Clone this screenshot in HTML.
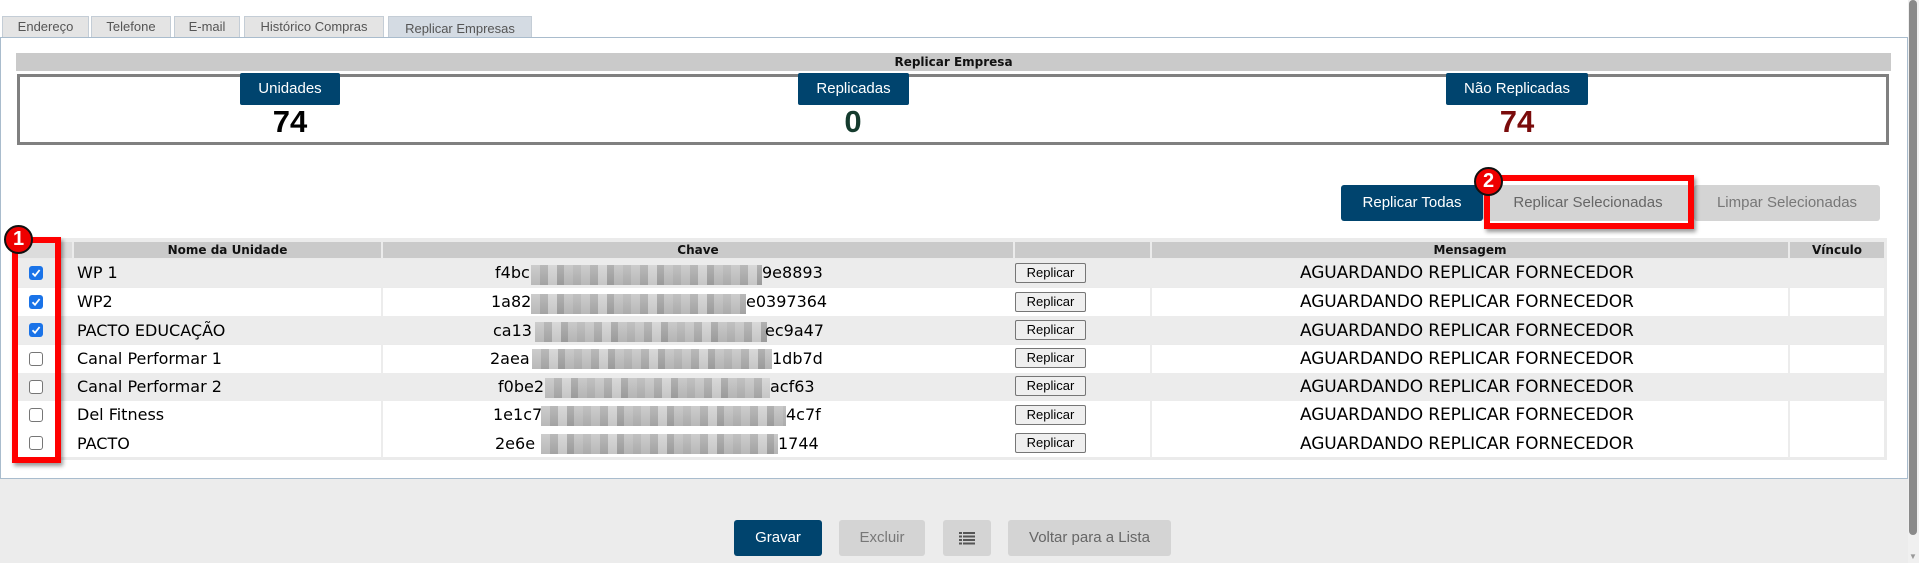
<!DOCTYPE html>
<html><head><meta charset="utf-8"><style>
*{margin:0;padding:0;box-sizing:border-box}
body{width:1919px;height:563px;background:#ececec;position:relative;overflow:hidden;font-family:"Liberation Sans",Arial,sans-serif}
.a{position:absolute}
.tab{position:absolute;top:16px;height:21px;background:#e4e4e4;border:1px solid #c4cdd6;border-bottom:none;font-size:13px;color:#555;text-align:center;line-height:19px}
.badge{position:absolute;top:73px;height:32px;background:#00446e;color:#fff;font-size:15px;text-align:center;line-height:32px;border-radius:2px}
.num{position:absolute;top:104px;font-size:31px;font-weight:bold;text-align:center;width:200px}
.btn{position:absolute;font-size:15px;text-align:center;border-radius:3px}
.hd{position:absolute;top:242px;height:16px;background:#cacaca;font:bold 12px "DejaVu Sans",Verdana,sans-serif;text-align:center;line-height:16px;color:#111}
.row{position:absolute;left:16px;width:1868px;height:28px}
.cell{position:absolute;top:0;height:100%;font:16px "DejaVu Sans",Verdana,sans-serif;line-height:28px;color:#000;white-space:nowrap}
.msg{font-size:17px;letter-spacing:-0.1px}
.cb{position:absolute;left:29px;width:14px;height:14px;border-radius:3px}
.cb.on{background:#1a73e8}
.cb.off{background:#fff;border:1px solid #767676}
.cb svg{position:absolute;left:2px;top:2px}
.rb{position:absolute;left:1015px;width:71px;height:20px;border:1px solid #767676;border-radius:2px;background:#efefef;font-size:13px;text-align:center;line-height:18px}
.blur{position:absolute;height:20px;background:linear-gradient(180deg,rgba(255,255,255,.15),rgba(0,0,0,.06)),repeating-linear-gradient(90deg,#c4c4c4 0 9px,#adadad 9px 17px,#d2d2d2 17px 26px,#a4a4a4 26px 33px,#c0c0c0 33px 42px,#b6b6b6 42px 50px)}
</style></head><body>
<div class="a" style="left:0;top:0;width:1908px;height:37px;background:#fff"></div>
<div class="tab" style="left:2px;width:87px">Endereço</div>
<div class="tab" style="left:91px;width:80px">Telefone</div>
<div class="tab" style="left:174px;width:66px">E-mail</div>
<div class="tab" style="left:244px;width:140px">Histórico Compras</div>
<div class="tab" style="left:388px;top:16px;height:22px;width:144px;background:#d4dbe3;line-height:24px">Replicar Empresas</div>
<div class="a" style="left:0;top:37px;width:1908px;height:442px;background:#fff;border:1px solid #a9bccd"></div>
<div class="a" style="left:16px;top:53px;width:1875px;height:18px;background:#cacaca;font:bold 12px 'DejaVu Sans',Verdana,sans-serif;text-align:center;line-height:18px;color:#111">Replicar Empresa</div>
<div class="a" style="left:17px;top:74px;width:1872px;height:71px;border:3px solid #808080"></div>
<div class="badge" style="left:240px;width:100px">Unidades</div>
<div class="num" style="left:190px;color:#000">74</div>
<div class="badge" style="left:798px;width:111px">Replicadas</div>
<div class="num" style="left:753px;color:#153b2e">0</div>
<div class="badge" style="left:1446px;width:142px">Não Replicadas</div>
<div class="num" style="left:1417px;color:#7a0b0b">74</div>
<div class="btn" style="left:1341px;top:185px;width:142px;height:36px;background:#00446e;color:#fff;line-height:36px">Replicar Todas</div>
<div class="btn" style="left:1483px;top:185px;width:210px;height:36px;background:#d4d4d4;color:#666;line-height:36px">Replicar Selecionadas</div>
<div class="btn" style="left:1694px;top:185px;width:186px;height:36px;background:#d4d4d4;color:#777;line-height:36px">Limpar Selecionadas</div>
<div class="a" style="left:1484px;top:175px;width:210px;height:54px;border:6px solid #f00;box-shadow:2px 3px 4px rgba(0,0,0,.4)"></div>
<div class="a" style="left:1474px;top:167px;width:29px;height:29px;border-radius:50%;background:#e00;border:2px solid #111;color:#fff;font:bold 20px 'Liberation Sans',sans-serif;text-align:center;line-height:25px">2</div>
<div class="a" style="left:16px;top:238px;width:1871px;height:222px;background:#ebebeb"></div>
<div class="hd" style="left:74px;width:307px">Nome da Unidade</div>
<div class="hd" style="left:383px;width:630px">Chave</div>
<div class="hd" style="left:1015px;width:135px"></div>
<div class="hd" style="left:1152px;width:636px">Mensagem</div>
<div class="hd" style="left:1790px;width:94px">Vínculo</div>
<div class="hd" style="left:16px;width:56px;background:#dcdcdc"></div>

<div class="row" style="top:259px;background:#ececec"></div>
<div class="row" style="top:288px;background:#fff"></div>
<div class="row" style="top:316px;background:#ececec"></div>
<div class="row" style="top:345px;background:#fff"></div>
<div class="row" style="top:373px;background:#ececec"></div>
<div class="row" style="top:401px;background:#fff"></div>
<div class="row" style="top:429px;background:#fff"></div>
<div class="a" style="left:381px;top:288px;width:2px;height:170px;background:#ececec"></div>
<div class="a" style="left:1150px;top:288px;width:2px;height:170px;background:#ececec"></div>
<div class="a" style="left:1788px;top:288px;width:2px;height:170px;background:#ececec"></div>

<div class="cb on" style="top:266px"><svg width="10" height="10" viewBox="0 0 10 10"><path d="M1.5 5.2 L4 7.8 L8.6 2" fill="none" stroke="#fff" stroke-width="1.8"/></svg></div>
<div class="cb on" style="top:295px"><svg width="10" height="10" viewBox="0 0 10 10"><path d="M1.5 5.2 L4 7.8 L8.6 2" fill="none" stroke="#fff" stroke-width="1.8"/></svg></div>
<div class="cb on" style="top:323px"><svg width="10" height="10" viewBox="0 0 10 10"><path d="M1.5 5.2 L4 7.8 L8.6 2" fill="none" stroke="#fff" stroke-width="1.8"/></svg></div>
<div class="cb off" style="top:352px"></div>
<div class="cb off" style="top:380px"></div>
<div class="cb off" style="top:408px"></div>
<div class="cb off" style="top:436px"></div>

<div class="cell" style="left:77px;top:259px;height:28px">WP 1</div>
<div class="cell" style="left:77px;top:288px;height:28px">WP2</div>
<div class="cell" style="left:77px;top:317px;height:28px">PACTO EDUCAÇÃO</div>
<div class="cell" style="left:77px;top:345px;height:28px">Canal Performar 1</div>
<div class="cell" style="left:77px;top:373px;height:28px">Canal Performar 2</div>
<div class="cell" style="left:77px;top:401px;height:28px">Del Fitness</div>
<div class="cell" style="left:77px;top:430px;height:28px">PACTO</div>

<div class="cell" style="left:495px;top:259px;height:28px">f4bc</div><div class="blur" style="left:531px;top:265px;width:231px"></div><div class="cell" style="left:762px;top:259px;height:28px">9e8893</div>
<div class="cell" style="left:491px;top:288px;height:28px">1a82</div><div class="blur" style="left:531px;top:294px;width:215px"></div><div class="cell" style="left:746px;top:288px;height:28px">e0397364</div>
<div class="cell" style="left:493px;top:317px;height:28px">ca13</div><div class="blur" style="left:535px;top:322px;width:232px"></div><div class="cell" style="left:765px;top:317px;height:28px">ec9a47</div>
<div class="cell" style="left:490px;top:345px;height:28px">2aea</div><div class="blur" style="left:532px;top:349px;width:240px"></div><div class="cell" style="left:772px;top:345px;height:28px">1db7d</div>
<div class="cell" style="left:498px;top:373px;height:28px">f0be2</div><div class="blur" style="left:545px;top:378px;width:225px"></div><div class="cell" style="left:770px;top:373px;height:28px">acf63</div>
<div class="cell" style="left:493px;top:401px;height:28px">1e1c7</div><div class="blur" style="left:541px;top:406px;width:245px"></div><div class="cell" style="left:786px;top:401px;height:28px">4c7f</div>
<div class="cell" style="left:495px;top:430px;height:28px">2e6e</div><div class="blur" style="left:541px;top:434px;width:237px"></div><div class="cell" style="left:778px;top:430px;height:28px">1744</div>

<div class="rb" style="top:263px">Replicar</div>
<div class="rb" style="top:292px">Replicar</div>
<div class="rb" style="top:320px">Replicar</div>
<div class="rb" style="top:348px">Replicar</div>
<div class="rb" style="top:376px">Replicar</div>
<div class="rb" style="top:405px">Replicar</div>
<div class="rb" style="top:433px">Replicar</div>

<div class="cell msg" style="left:1300px;top:259px;height:28px">AGUARDANDO REPLICAR FORNECEDOR</div>
<div class="cell msg" style="left:1300px;top:288px;height:28px">AGUARDANDO REPLICAR FORNECEDOR</div>
<div class="cell msg" style="left:1300px;top:317px;height:28px">AGUARDANDO REPLICAR FORNECEDOR</div>
<div class="cell msg" style="left:1300px;top:345px;height:28px">AGUARDANDO REPLICAR FORNECEDOR</div>
<div class="cell msg" style="left:1300px;top:373px;height:28px">AGUARDANDO REPLICAR FORNECEDOR</div>
<div class="cell msg" style="left:1300px;top:401px;height:28px">AGUARDANDO REPLICAR FORNECEDOR</div>
<div class="cell msg" style="left:1300px;top:430px;height:28px">AGUARDANDO REPLICAR FORNECEDOR</div>

<div class="a" style="left:12px;top:237px;width:49px;height:226px;border:6px solid #f00;box-shadow:2px 3px 4px rgba(0,0,0,.4)"></div>
<div class="a" style="left:4px;top:225px;width:29px;height:29px;border-radius:50%;background:#e00;border:2px solid #111;color:#fff;font:bold 20px 'Liberation Sans',sans-serif;text-align:center;line-height:25px">1</div>

<div class="btn" style="left:734px;top:520px;width:88px;height:36px;background:#00446e;color:#fff;line-height:36px">Gravar</div>
<div class="btn" style="left:839px;top:520px;width:86px;height:36px;background:#d4d4d4;color:#777;line-height:36px">Excluir</div>
<div class="btn" style="left:943px;top:520px;width:48px;height:36px;background:#d4d4d4">
<svg width="16" height="13" style="margin-top:12px" viewBox="0 0 16 13"><g fill="#555"><rect x="0" y="0" width="3" height="2"/><rect x="4" y="0" width="12" height="2"/><rect x="0" y="3.5" width="3" height="2"/><rect x="4" y="3.5" width="12" height="2"/><rect x="0" y="7" width="3" height="2"/><rect x="4" y="7" width="12" height="2"/><rect x="0" y="10.5" width="3" height="2"/><rect x="4" y="10.5" width="12" height="2"/></g></svg></div>
<div class="btn" style="left:1008px;top:520px;width:163px;height:36px;background:#d4d4d4;color:#666;line-height:36px">Voltar para a Lista</div>

<div class="a" style="left:1908px;top:0;width:11px;height:563px;background:#f0f0f0"></div>
<div class="a" style="left:1909px;top:0;width:8px;height:535px;background:#8a8a8a;border-radius:4px"></div>
<div class="a" style="left:1909px;top:552px;font-size:8px;color:#999">▼</div>
</body></html>
